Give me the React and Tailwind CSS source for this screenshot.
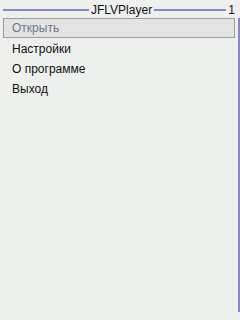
export default function App() {
  const items = ["Настройки", "О программе", "Выход"];
  return (
    <div
      className="w-[240px] h-[320px] bg-[#eef0ee] flex flex-col overflow-hidden text-[12px] text-[#111]"
      style={{ fontFamily: '"Liberation Sans", Arial, sans-serif' }}
    >
      <div className="h-[18px] flex items-center pl-[3px] pr-[5px] pt-[1px]">
        <div className="w-[86px] h-[2px] bg-[#8a87cc]" />
        <span className="px-[2px] leading-none">JFLVPlayer</span>
        <div className="flex-1 h-[2px] bg-[#8a87cc]" />
        <span className="pl-[2px] leading-none">1</span>
      </div>
      <div className="flex flex-1 min-h-0">
        <div className="flex-1 flex flex-col pl-[3px] pr-[3px]">
          <div className="h-[20px] border border-[#9c9c9c] bg-[#e3e3e3] flex items-center pl-[8px] text-[#6f7a88]">
            Открыть
          </div>
          {items.map((t) => (
            <div key={t} className="h-[20px] flex items-center pl-[9px] pt-[1px]">
              {t}
            </div>
          ))}
        </div>
        <div className="w-[2px] bg-[#8a87cc] mb-[8px]" />
      </div>
    </div>
  );
}
